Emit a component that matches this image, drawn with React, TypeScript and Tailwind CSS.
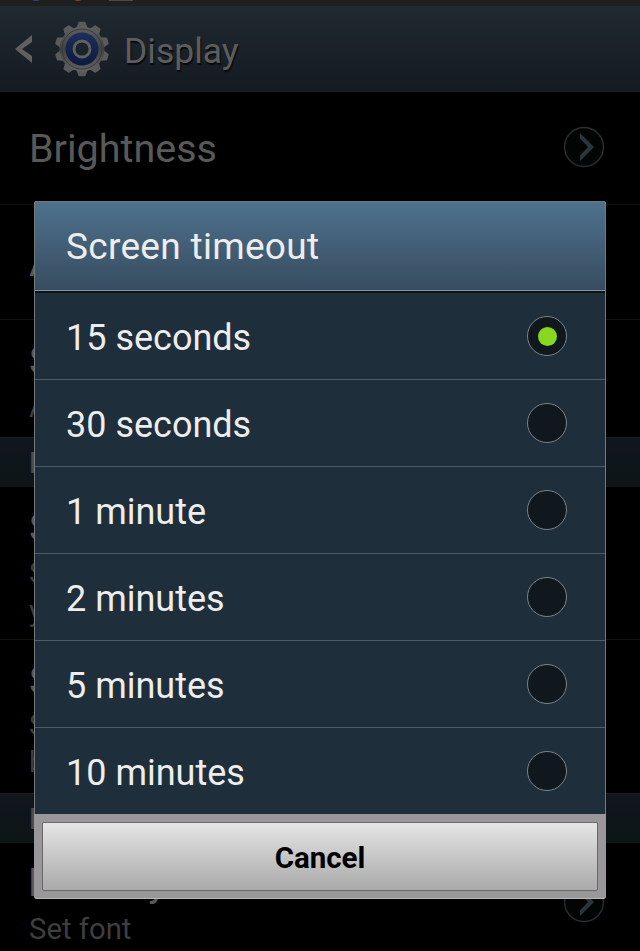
import React from "react";

const options = [
  { label: "15 seconds", selected: true },
  { label: "30 seconds", selected: false },
  { label: "1 minute", selected: false },
  { label: "2 minutes", selected: false },
  { label: "5 minutes", selected: false },
  { label: "10 minutes", selected: false },
];

function GearIcon() {
  const teeth = Array.from({ length: 10 }, (_, i) => i * 36);
  return (
    <svg width="56" height="56" viewBox="-28 -28 56 56" className="shrink-0">
      <defs>
        <linearGradient id="metal" x1="0" y1="0" x2="0" y2="1">
          <stop offset="0" stopColor="#606060" />
          <stop offset="0.5" stopColor="#424242" />
          <stop offset="1" stopColor="#626262" />
        </linearGradient>
        <linearGradient id="blue" x1="0" y1="0" x2="0" y2="1">
          <stop offset="0" stopColor="#1f2e5a" />
          <stop offset="1" stopColor="#0b1a40" />
        </linearGradient>
      </defs>
      {teeth.map((a) => (
        <path key={a} d="M-5.6-21L-3.6-26.4Q-3.3-27.2-2.6-27.2H2.6Q3.3-27.2 3.6-26.4L5.6-21Z" fill="#5a5a5a" transform={`rotate(${a})`} />
      ))}
      <circle r="22.5" fill="url(#metal)" />
      <circle r="20" fill="none" stroke="#333" strokeWidth="0.8" />
      <circle r="16.5" fill="url(#blue)" />
      <circle r="8" fill="#1c2226" stroke="#5e6164" strokeWidth="2.8" />
    </svg>
  );
}

function MoreIcon() {
  return (
    <svg width="42" height="42" viewBox="0 0 42 42" className="shrink-0">
      <circle cx="21" cy="21" r="19.5" fill="#030505" stroke="#2b2e30" strokeWidth="1.4" />
      <path d="M17 7V12.5L25 21L17 29.5V35L31 21Z" fill="#2c343c" />
    </svg>
  );
}

function Section({ title }: { title: string }) {
  return (
    <div className="h-[50px] shrink-0 border-t border-[#1c1f22] bg-linear-to-b from-[#10161d] to-[#0d1517] pl-[29px] text-[30px] leading-[50px] font-medium text-[#4c4c4c]">
      {title}
    </div>
  );
}

function Settings() {
  return (
    <div className="flex h-full w-full flex-col bg-black">
      <div className="flex h-[6px] shrink-0 overflow-hidden bg-[#1f1f1f] pl-[29px]">
        <div className="-mt-[13px] size-[14px] rounded-full bg-[#2d4a8c]" />
        <div className="-mt-[13px] ml-[28px] size-[14px] rounded-full bg-[#8a4030]" />
        <div className="ml-[24px] h-px w-[24px] bg-[#4a4a4a]" />
      </div>
      <header className="flex h-[86px] shrink-0 items-center border-b border-[#1b232a] bg-linear-to-b from-[#202a31] to-[#151a21] pl-[15px]">
        <svg width="18" height="28" viewBox="0 0 18 28" className="shrink-0">
          <path d="M17 0V7L7 14L17 21V28L0 14Z" fill="#606060" />
        </svg>
        <div className="ml-[21px] flex">
          <GearIcon />
        </div>
        <h1 className="ml-[14px] pt-[4px] text-[35.5px] leading-[44px] text-[#5d5d5d] [text-shadow:1px_2px_1px_#080a0c]">Display</h1>
      </header>
      <div className="flex h-[113px] shrink-0 items-center justify-between border-b border-[#111] pr-[35px] pl-[29px]">
        <span className="pt-[2px] text-[39.5px] text-[#595959]">Brightness</span>
        <div className="pb-[2px]">
          <MoreIcon />
        </div>
      </div>
      <div className="flex h-[115px] shrink-0 items-center border-b border-[#111] pt-[3px] pl-[29px] text-[39px] text-[#595959]">Auto-rotate screen</div>
      <div className="h-[117px] shrink-0 pt-[18px] pl-[29px]">
        <div className="text-[39px] leading-[46px] text-[#595959]">Screen timeout</div>
        <div className="text-[29px] leading-[46px] text-[#3e3e3e]">After 15 seconds</div>
      </div>
      <Section title="Eye recognition" />
      <div className="h-[153px] shrink-0 border-b border-[#111] pt-[18px] pl-[29px]">
        <div className="text-[39px] leading-[46px] text-[#595959]">Smart stay</div>
        <div className="pt-[3px] text-[29px] leading-[38px] text-[#3e3e3e]">Smart stay detects when</div>
        <div className="text-[29px] leading-[38px] text-[#3e3e3e]">your eyes are watching</div>
      </div>
      <div className="h-[153px] shrink-0 pt-[18px] pl-[29px]">
        <div className="text-[39px] leading-[46px] text-[#595959]">Smart rotation</div>
        <div className="pt-[3px] text-[29px] leading-[37px] text-[#3e3e3e]">Smart rotation works</div>
        <div className="text-[29px] leading-[37px] text-[#3e3e3e]">by checking your face</div>
      </div>
      <Section title="Font" />
      <div className="flex shrink-0 justify-between pt-[17px] pr-[35px] pl-[28px]">
        <div>
          <div className="text-[39px] leading-[46px] text-[#595959]">Font style</div>
          <div className="pl-px text-[29.3px] leading-[46px] text-[#3e3e3e]">Set font</div>
        </div>
        <div className="mt-[21px]">
          <MoreIcon />
        </div>
      </div>
    </div>
  );
}

function TimeoutDialog() {
  return (
    <div className="absolute top-[201px] left-[34px] flex h-[698px] w-[572px] flex-col overflow-hidden rounded-[3px] bg-[#9a979a]">
      <div className="flex h-[613px] shrink-0 flex-col border-x-[1.5px] border-t border-[#77787a]">
        <h2 className="flex h-[89px] shrink-0 items-center border-b border-[#8794a0] bg-linear-to-b from-[#4e718d] to-[#374c60] pt-[2px] pl-[31px] text-[37px] tracking-[0.3px] text-[#ededed]">
          Screen timeout
        </h2>
        <ul className="flex flex-1 flex-col border-t-2 border-[#0b1218] bg-[#1f2e3b]">
          {options.map((option) => (
            <li key={option.label} className="flex h-[87px] shrink-0 items-center justify-between border-b border-[#4e5c67] pr-[38px] pl-[31px] last:h-[86px] last:border-b-0">
              <span className="pt-[3px] text-[36px] text-[#ededed]">{option.label}</span>
              <span className="flex size-[40px] items-center justify-center rounded-full border-[1.5px] border-[#7b8389] bg-[#10171d]">
                {option.selected && <span className="size-[19px] rounded-full bg-[#88d820]" />}
              </span>
            </li>
          ))}
        </ul>
      </div>
      <div className="flex flex-1 rounded-b-[3px] p-2 shadow-[inset_0_-1px_0_#b8b8b8]">
        <button className="flex-1 rounded-[2px] border border-[#686868] bg-linear-to-b from-[#e5e5e5] to-[#aaa] pt-[4px] text-[29.5px] font-bold text-black">Cancel</button>
      </div>
    </div>
  );
}

export default function App() {
  return (
    <main className="relative h-[951px] w-[640px] overflow-hidden bg-black font-[Roboto,sans-serif]">
      <Settings />
      <TimeoutDialog />
    </main>
  );
}
